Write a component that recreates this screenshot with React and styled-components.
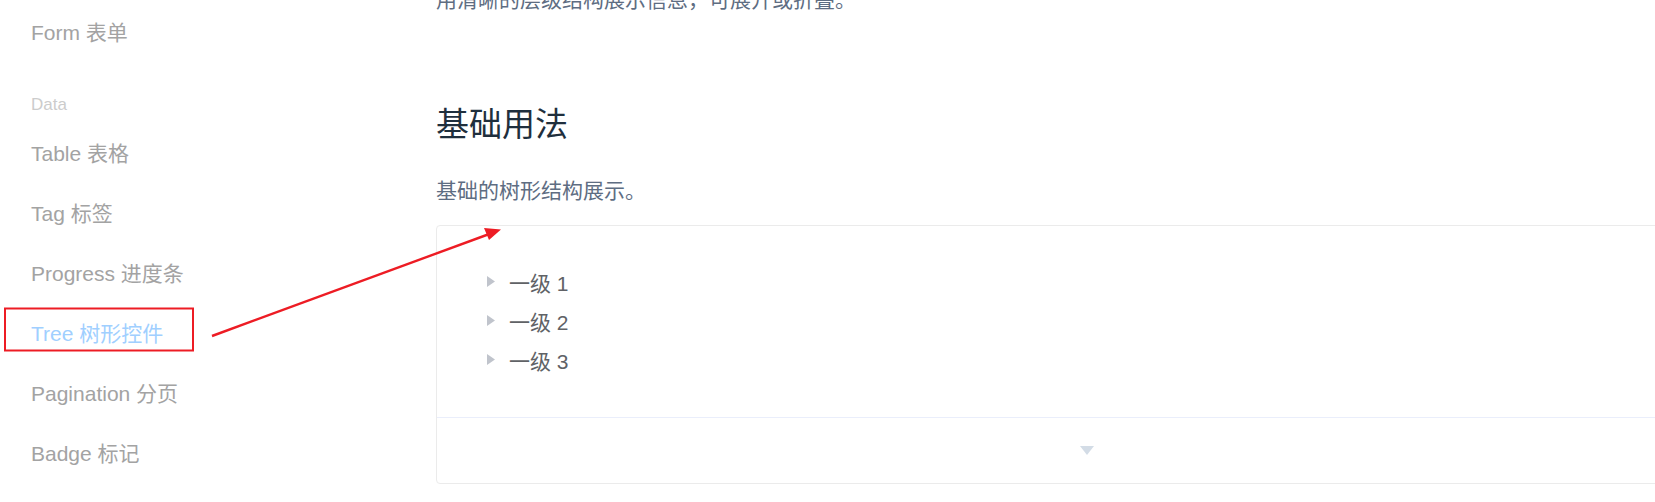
import styled, { createGlobalStyle } from "styled-components";

const GlobalStyle = createGlobalStyle`
  html, body {
    margin: 0;
    padding: 0;
    background: #fff;
    overflow: hidden;
  }
  body {
    width: 1655px;
    height: 502px;
    font-family: "Liberation Sans", "Noto Sans CJK SC", sans-serif;
  }
`;

const navGroups = [
  { items: ["Form 表单"] },
  {
    title: "Data",
    items: [
      "Table 表格",
      "Tag 标签",
      "Progress 进度条",
      "Tree 树形控件",
      "Pagination 分页",
      "Badge 标记",
    ],
  },
];

const treeNodes = ["一级 1", "一级 2", "一级 3"];

const App = () => {
  return (
    <>
      <GlobalStyle />
      <Page>
        <Sidebar>
          {navGroups.map((group, i) => (
            <NavGroup key={i}>
              {group.title && <GroupTitle>{group.title}</GroupTitle>}
              {group.items.map((item) => (
                <NavItem key={item} $active={item.startsWith("Tree")}>
                  {item}
                </NavItem>
              ))}
            </NavGroup>
          ))}
        </Sidebar>
        <Main>
          <Intro>用清晰的层级结构展示信息，可展开或折叠。</Intro>
          <Heading>基础用法</Heading>
          <Desc>基础的树形结构展示。</Desc>
          <DemoBlock>
            <Source>
              {treeNodes.map((node) => (
                <TreeNode key={node}>
                  <ExpandIcon>
                    <svg width="8" height="11" viewBox="0 0 8 11">
                      <path d="M0 0 L8 5.5 L0 11 Z" fill="#c0c4cc" />
                    </svg>
                  </ExpandIcon>
                  <NodeLabel>{node}</NodeLabel>
                </TreeNode>
              ))}
            </Source>
            <Control>
              <svg width="14" height="9" viewBox="0 0 14 9">
                <path d="M0 0 L14 0 L7 9 Z" fill="#d3dce6" />
              </svg>
            </Control>
          </DemoBlock>
        </Main>
        <Annotation width="1655" height="502" viewBox="0 0 1655 502">
          <rect
            x="5"
            y="308.5"
            width="188"
            height="42"
            fill="none"
            stroke="#ed1c24"
            strokeWidth="2"
          />
          <line
            x1="212"
            y1="336"
            x2="492"
            y2="233"
            stroke="#ed1c24"
            strokeWidth="2.4"
          />
          <path d="M501 229.5 L484 228 L489 240 Z" fill="#ed1c24" />
        </Annotation>
      </Page>
    </>
  );
};

const Page = styled.div`
  position: relative;
  display: flex;
  width: 1655px;
  height: 502px;
  overflow: hidden;
`;

const Sidebar = styled.nav`
  flex: 0 0 436px;
  padding: 3px 0 0 31px;
  box-sizing: border-box;
`;

const NavGroup = styled.div`
  display: flex;
  flex-direction: column;
`;

const GroupTitle = styled.div`
  margin-top: 22px;
  font-size: 17px;
  line-height: 39px;
  color: #cccccc;
`;

const NavItem = styled.a`
  display: block;
  font-size: 21px;
  line-height: 60px;
  color: ${(p) => (p.$active ? "#a0cfff" : "#a3a3a3")};
  white-space: nowrap;
`;

const Main = styled.main`
  flex: 0 0 1300px;
  margin-top: -16px;
`;

const Intro = styled.p`
  margin: 0;
  font-size: 21px;
  line-height: 32px;
  color: #5e6d82;
`;

const Heading = styled.h3`
  margin: 87px 0 0;
  font-size: 33px;
  font-weight: 400;
  line-height: 44px;
  color: #1f2f3d;
`;

const Desc = styled.p`
  margin: 28px 0 0;
  font-size: 21px;
  line-height: 32px;
  color: #5e6d82;
`;

const DemoBlock = styled.div`
  margin-top: 18px;
  border: 1.5px solid #ebebeb;
  border-radius: 4px;
  width: 1300px;
  box-sizing: border-box;
`;

const Source = styled.div`
  padding: 36px 36px 38px;
`;

const TreeNode = styled.div`
  display: flex;
  align-items: center;
  height: 39px;
`;

const ExpandIcon = styled.span`
  display: flex;
  align-items: center;
  justify-content: center;
  width: 18px;
  padding: 9px;
`;

const NodeLabel = styled.span`
  font-size: 21px;
  color: #606266;
`;

const Control = styled.div`
  height: 66px;
  box-sizing: border-box;
  border-top: 1.5px solid #eaeefb;
  display: flex;
  align-items: center;
  padding-left: 643px;
`;

const Annotation = styled.svg`
  position: absolute;
  left: 0;
  top: 0;
  pointer-events: none;
`;

export default App;
